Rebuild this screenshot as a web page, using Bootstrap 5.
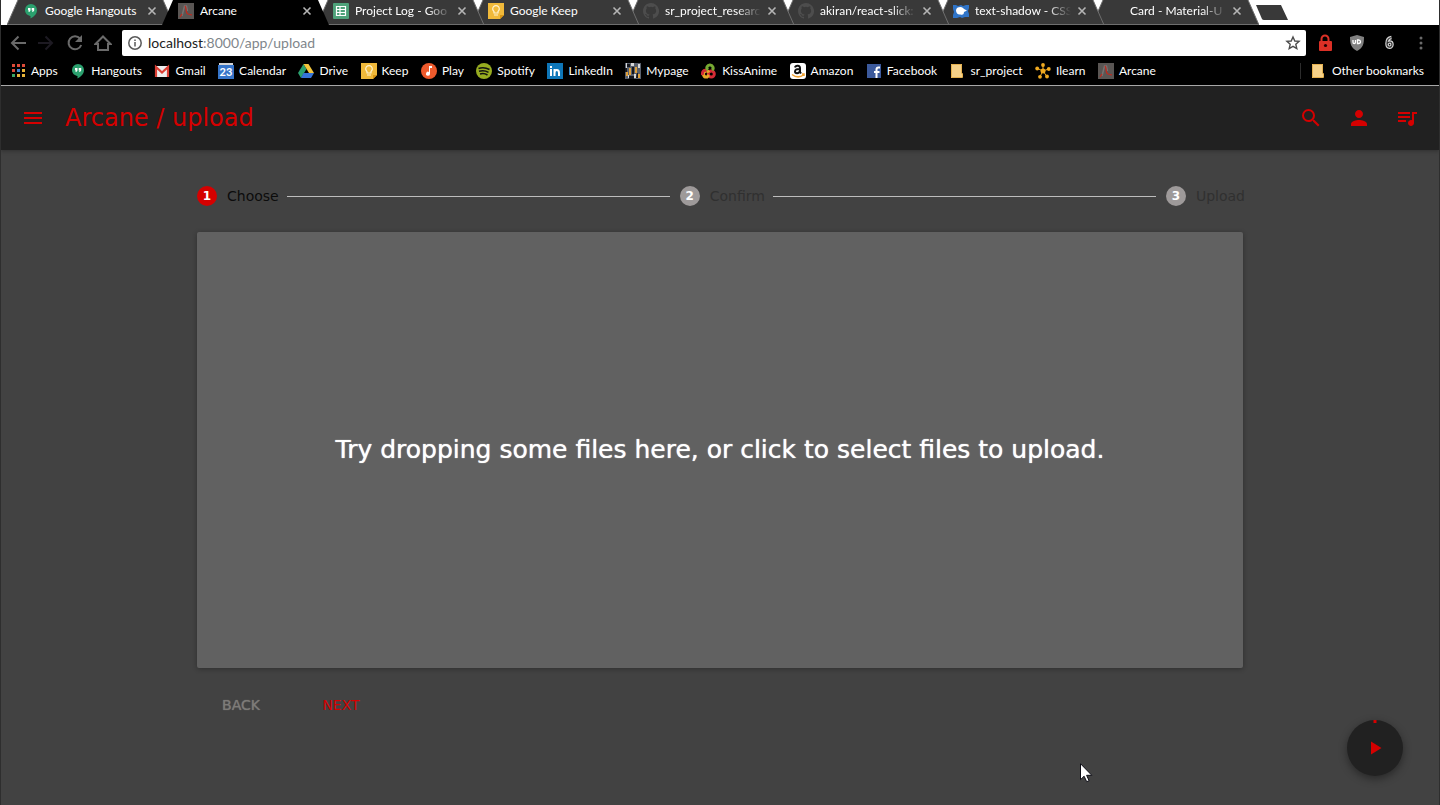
<!DOCTYPE html>
<html lang="en">
<head>
<meta charset="utf-8">
<meta name="viewport" content="width=device-width, initial-scale=1">
<title>Arcane</title>
<link href="https://cdn.jsdelivr.net/npm/bootstrap@5.3.0/dist/css/bootstrap.min.css" rel="stylesheet">
<style>
  :root { --arc-red: #d50000; --arc-bar: #212121; --arc-bg: #424242; }
  body { font-family: "Lato", "Liberation Sans", sans-serif; background: var(--arc-bg); border: solid #2e2e2e; border-width: 0 1px; }
  button { background: none; border: 0; padding: 0; color: inherit; }
  svg { display: block; flex: none; }

  /* browser tabs */
  .tab-strip { height: 25px; background: #fff; padding-left: 6px; }
  .browser-tab { width: 167px; margin-right: -12px; padding: 0 17px 3px 16px; font-size: 12px; color: #fff; flex: none; }
  .browser-tab a { color: #fff; gap: 6px; min-width: 0; }
  .tab-shape { position: absolute; inset: 0; z-index: -1; }
  .tab-title { white-space: nowrap; width: 96px; }
  .tab-title.fades { -webkit-mask-image: linear-gradient(90deg, #000 75%, transparent); mask-image: linear-gradient(90deg, #000 75%, transparent); }
  .browser-tab button { color: #b5b5b5; }
  .browser-tab:nth-child(1) { z-index: 8; } .browser-tab:nth-child(2) { z-index: 9; }
  .browser-tab:nth-child(3) { z-index: 7; } .browser-tab:nth-child(4) { z-index: 6; }
  .browser-tab:nth-child(5) { z-index: 5; } .browser-tab:nth-child(6) { z-index: 4; }
  .browser-tab:nth-child(7) { z-index: 3; } .browser-tab:nth-child(8) { z-index: 2; }

  /* toolbar and bookmarks */
  .toolbar-row { padding: 5px 9px 0 8px; height: 31px; color: #5c5c5c; }
  .nav-keys { width: 113px; padding-right: 10px; }
  .url-box { border-radius: 2px; height: 26px; padding: 0 5px; gap: 5px; }
  .url-box input { font-size: 14px; line-height: 20px; color: #80868b; margin-left: -5px; }
  .url-box .host { font-size: 14px; line-height: 20px; color: #222; }
  .ext-keys { width: 124px; padding-left: 10px; }
  .bookmark-row { height: 30px; padding: 0 15px 0 9px; font-size: 12px; border-bottom: 1px solid #b4b4b4; }
  .bookmark-row nav { flex: 0 1 1146px; }
  .bookmark-row a { color: #fff; gap: 5px; white-space: nowrap; }
  .other-marks { border-left: 1px solid #2c2c2c; padding-left: 10px; height: 16px; }

  /* application */
  .arc-app { font-family: "DejaVu Sans", sans-serif; }
  .arc-bar { height: 64px; background: var(--arc-bar); color: var(--arc-red); padding: 0 20px; box-shadow: 0 1px 4px rgba(0,0,0,.3); }
  .arc-title { font-size: 24px; line-height: 32px; margin: 0 0 0 20px; font-weight: 400; }
  .arc-main { max-width: 1046px; margin: 0 auto; padding-top: 34px; }
  .stepper { font-size: 14px; line-height: 24px; height: 24px; margin-right: -2px; }
  .step-item { gap: 10px; color: #303030; }
  .step-item.current { color: #0c0c0c; }
  .step-dot { width: 20px; height: 20px; border-radius: 50%; background: #9e9a9a; color: #fff; font-size: 12px; line-height: 20px; font-weight: 700; text-align: center; }
  .current .step-dot { background: var(--arc-red); }
  .step-line { height: 1px; background: #bdbdbd; margin: 0 10px 0 8px; }
  .drop-zone { margin-top: 24px; height: calc(100vh - 369px); min-height: 200px; background: #616161; color: #fff; font-size: 25px; line-height: 32px; text-shadow: 0 0 1px #fff; border-radius: 2px; box-shadow: 0 1px 5px rgba(0,0,0,.3); }
  .step-actions { padding-top: 19px; gap: 12px; }
  .step-actions button { min-width: 88px; height: 36px; font-size: 14px; color: var(--arc-red); }
  .step-actions button:disabled { color: #7d7b78; text-shadow: 0 0 1px #7d7b78; }
  .play-fab { position: fixed; right: 37px; bottom: 29px; width: 56px; height: 56px; border-radius: 50%; background: var(--arc-bar); box-shadow: 0 3px 8px rgba(0,0,0,.4); }
  .pointer { position: absolute; left: 1080px; top: 763px; }
</style>
</head>
<body class="min-vh-100">

<!-- shared icons -->
<svg width="0" height="0" class="position-absolute" aria-hidden="true">
  <symbol id="i-hangouts" viewBox="0 0 16 16"><path fill="#2ba06e" d="M8 1a6 6 0 0 0-6 6.100c0 3.400 2.700 5.800 5.500 5.800V15.600C11 13.800 14 10.800 14 7A6 6 0 0 0 8 1z"/><path fill="#fff" d="M5 5h2.500v2.500L6.300 9H5.400l.6-1.500H5zM8.700 5h2.500v2.500L10 9h-.9l.6-1.500h-1z"/></symbol>
  <symbol id="i-arcane" viewBox="0 0 16 16"><path fill="#5a5654" d="M0 0h16v16H0z"/><path fill="none" stroke="#777271" stroke-width="1.500" d="M4 13 6.500 3h2l1 5"/><path fill="none" stroke="#c4281d" stroke-width="1.200" d="M7 3c2 2 0 7 3 8l4 1M4 11l-2 3"/></symbol>
  <symbol id="i-keep" viewBox="0 0 16 16"><path fill="#f0b93a" d="M0 0h16v12l-4 4H0z"/><path fill="#d99512" d="M12 12h4l-4 4z"/><path fill="none" stroke="#fff3cf" stroke-width="1.200" d="M6 10V8.500a3.300 3.300 0 1 1 4 0V10zM6 12h4"/></symbol>
  <symbol id="i-github" viewBox="0 0 16 16"><path fill="#4d4d4d" d="M8 0C3.580 0 0 3.580 0 8c0 3.540 2.290 6.530 5.470 7.590.4.070.55-.17.55-.38v-1.490c-2.010.37-2.530-.49-2.690-.94-.09-.23-.48-.94-.82-1.130-.28-.15-.68-.52-.01-.53.63-.01 1.080.58 1.230.82.72 1.210 1.870.87 2.330.66.070-.52.28-.87.51-1.070-1.780-.2-3.640-.89-3.640-3.950 0-.87.31-1.590.82-2.150-.08-.2-.36-1.020.08-2.120 0 0 .67-.21 2.200.82a7.700 7.700 0 0 1 4 0c1.530-1.040 2.200-.82 2.200-.82.44 1.100.16 1.920.08 2.120.51.56.82 1.270.82 2.150 0 3.070-1.870 3.750-3.650 3.950.29.25.54.73.54 1.480v2.200c0 .21.15.46.55.38A8 8 0 0 0 8 0z"/></symbol>
  <symbol id="i-folder" viewBox="0 0 16 16"><path fill="#f5d189" d="M1 1h11v14H1z"/><path fill="none" stroke="#e4b04e" d="M1.500 1.500h10v9h1v4h-11z"/></symbol>
  <symbol id="i-close" viewBox="0 0 10 10"><path fill="none" stroke="currentColor" stroke-width="1.600" d="m1.500 1.500 7 7m0-7-7 7"/></symbol>
  <symbol id="i-tab" viewBox="0 0 167 25"><path fill="#393939" d="M0 25 11 0h145l11 25z"/><path fill="none" stroke="#6e6e6e" d="M0 24.500h167M0 25 11 0m145 0 11 25"/></symbol>
</svg>

<header class="bg-black">
  <div class="tab-strip d-flex">
    <div class="browser-tab position-relative d-flex align-items-center justify-content-between">
      <svg class="tab-shape" width="167" height="25"><use href="#i-tab"/></svg>
      <a href="#" class="d-flex align-items-center text-decoration-none"><svg width="16" height="16"><use href="#i-hangouts"/></svg><span class="tab-title">Google Hangouts</span></a>
      <button type="button" aria-label="Close tab"><svg width="10" height="10"><use href="#i-close"/></svg></button>
    </div>
    <div class="browser-tab position-relative d-flex align-items-center justify-content-between">
      <svg class="tab-shape" width="167" height="25"><path d="M0 25 11 0h145l11 25z"/></svg>
      <a href="#" class="d-flex align-items-center text-decoration-none"><svg width="16" height="16"><use href="#i-arcane"/></svg><span class="tab-title">Arcane</span></a>
      <button type="button" aria-label="Close tab"><svg width="10" height="10"><use href="#i-close"/></svg></button>
    </div>
    <div class="browser-tab position-relative d-flex align-items-center justify-content-between">
      <svg class="tab-shape" width="167" height="25"><use href="#i-tab"/></svg>
      <a href="#" class="d-flex align-items-center text-decoration-none"><svg width="16" height="16" viewBox="0 0 16 16"><rect width="16" height="16" rx="1" fill="#4fa27a"/><path fill="none" stroke="#fff" stroke-width="1.200" d="M3.500 3.500h9v9h-9zM3.500 6.500h9m-9 3h9M7 3.500v9"/></svg><span class="tab-title fades">Project Log - Goo</span></a>
      <button type="button" aria-label="Close tab"><svg width="10" height="10"><use href="#i-close"/></svg></button>
    </div>
    <div class="browser-tab position-relative d-flex align-items-center justify-content-between">
      <svg class="tab-shape" width="167" height="25"><use href="#i-tab"/></svg>
      <a href="#" class="d-flex align-items-center text-decoration-none"><svg width="16" height="16"><use href="#i-keep"/></svg><span class="tab-title">Google Keep</span></a>
      <button type="button" aria-label="Close tab"><svg width="10" height="10"><use href="#i-close"/></svg></button>
    </div>
    <div class="browser-tab position-relative d-flex align-items-center justify-content-between">
      <svg class="tab-shape" width="167" height="25"><use href="#i-tab"/></svg>
      <a href="#" class="d-flex align-items-center text-decoration-none"><svg width="16" height="16"><use href="#i-github"/></svg><span class="tab-title fades">sr_project_researc</span></a>
      <button type="button" aria-label="Close tab"><svg width="10" height="10"><use href="#i-close"/></svg></button>
    </div>
    <div class="browser-tab position-relative d-flex align-items-center justify-content-between">
      <svg class="tab-shape" width="167" height="25"><use href="#i-tab"/></svg>
      <a href="#" class="d-flex align-items-center text-decoration-none"><svg width="16" height="16"><use href="#i-github"/></svg><span class="tab-title fades">akiran/react-slick:</span></a>
      <button type="button" aria-label="Close tab"><svg width="10" height="10"><use href="#i-close"/></svg></button>
    </div>
    <div class="browser-tab position-relative d-flex align-items-center justify-content-between">
      <svg class="tab-shape" width="167" height="25"><use href="#i-tab"/></svg>
      <a href="#" class="d-flex align-items-center text-decoration-none"><svg width="16" height="16" viewBox="0 0 16 16"><path fill="#2f74c8" d="M0 2h3l2 1 3-1 2 1 3-1h3v3l-1 3 1 3v3h-4l-3 1-2-1-3 1H0v-3l1-3-1-3z"/><path fill="#fff" d="M3 7.500C3 5 5 4 7.500 4c2 0 2.500 1 3.500 2l3 1.500-3 1.500c0 3-2 3-3.500 2.500C5 12 3 10 3 7.500z"/></svg><span class="tab-title fades">text-shadow - CSS</span></a>
      <button type="button" aria-label="Close tab"><svg width="10" height="10"><use href="#i-close"/></svg></button>
    </div>
    <div class="browser-tab position-relative d-flex align-items-center justify-content-between">
      <svg class="tab-shape" width="167" height="25"><use href="#i-tab"/></svg>
      <a href="#" class="d-flex align-items-center text-decoration-none"><svg width="16" height="16"></svg><span class="tab-title fades">Card - Material-U</span></a>
      <button type="button" aria-label="Close tab"><svg width="10" height="10"><use href="#i-close"/></svg></button>
    </div>
    <button type="button" class="ms-2" aria-label="New tab"><svg width="34" height="24" viewBox="0 0 34 24"><path fill="#393939" d="M1 4h25l7 15H9q-1.500 0-2-1z"/></svg></button>
  </div>

  <div class="toolbar-row d-flex align-items-center">
    <div class="nav-keys d-flex justify-content-between">
      <button type="button" aria-label="Back"><svg width="18" height="18" viewBox="0 0 18 18" fill="none" stroke="#6a6a6a" stroke-width="2"><path d="M17 9H3m6.500-6.500L3 9l6.500 6.500"/></svg></button>
      <button type="button" aria-label="Forward" disabled><svg width="18" height="18" viewBox="0 0 18 18" fill="none" stroke="#1d1a22" stroke-width="2"><path d="M1 9h14M8.500 2.500 15 9l-6.500 6.500"/></svg></button>
      <button type="button" aria-label="Reload"><svg width="18" height="18" viewBox="0 0 18 18"><path fill="none" stroke="#6a6a6a" stroke-width="2" d="M14 4.500A6.500 6.500 0 1 0 15.200 11"/><path fill="#6a6a6a" d="M16 1v7H9z"/></svg></button>
      <button type="button" aria-label="Home"><svg width="18" height="18" viewBox="0 0 18 18" fill="none" stroke="#6a6a6a" stroke-width="2"><path d="M1.500 10 9 2.500l7.500 7.500H14v6H4v-6z"/></svg></button>
    </div>
    <div class="url-box bg-white d-flex align-items-center flex-grow-1">
      <svg width="16" height="16" viewBox="0 0 16 16" fill="none" stroke="#5a5a5a" stroke-width="1.500"><circle cx="8" cy="8" r="6.200"/><path d="M8 7v4.500M8 4.500V6"/></svg>
      <label for="address" class="host">localhost</label>
      <input id="address" type="text" class="border-0 p-0 flex-grow-1 bg-transparent" value=":8000/app/upload">
      <button type="button" aria-label="Bookmark this page"><svg width="16" height="16" viewBox="0 0 16 16" fill="none" stroke="#4c4c4c" stroke-width="1.400"><path d="m8 2 1.800 4 4.300.4-3.300 2.900 1 4.300L8 11.300l-3.800 2.300 1-4.300-3.300-2.900L6.200 6z"/></svg></button>
    </div>
    <div class="ext-keys d-flex align-items-center justify-content-between">
      <button type="button" aria-label="Lock extension"><svg width="18" height="18" viewBox="0 0 18 18"><path fill="none" stroke="#dc3026" stroke-width="2" d="M5.500 8V5a3.500 3.500 0 0 1 7 0v3"/><rect x="3" y="7" width="13" height="10" rx="1" fill="#dc3026"/><circle cx="9.500" cy="11.500" r="1.600" fill="#200"/></svg></button>
      <button type="button" aria-label="Shield extension"><svg width="18" height="18" viewBox="0 0 18 18"><path fill="#808080" d="m9 1 7 2c0 7-1 11-7 14C3 14 2 10 2 3z"/><path fill="none" stroke="#fff" stroke-width="1.300" d="M5 6v2.200q0 1.300 1.200 1.300T7.500 8.200V6M9.500 6v3.500h1q2 0 2-1.700T10.500 6z"/></svg></button>
      <button type="button" aria-label="Counter extension"><svg width="18" height="18" viewBox="0 0 18 18" fill="none"><path stroke="#d5d5d5" stroke-width="3.500" d="M11.500 3.500C8 4 7 6.500 7 9.500c0 5 5 4.500 5 1S8 7.500 7 10"/><path stroke="#333" stroke-width="1.200" d="M11.500 3.500C8 4 7 6.500 7 9.500c0 5 5 4.500 5 1S8 7.500 7 10"/></svg></button>
      <button type="button" aria-label="Menu"><svg width="18" height="18" viewBox="0 0 18 18" fill="#6a6a6a"><circle cx="9" cy="4" r="1.500"/><circle cx="9" cy="9" r="1.500"/><circle cx="9" cy="14" r="1.500"/></svg></button>
    </div>
  </div>

  <div class="bookmark-row d-flex align-items-center justify-content-between">
    <nav class="d-flex align-items-center justify-content-between" aria-label="Bookmarks">
      <a href="#" class="d-flex align-items-center text-decoration-none"><svg width="16" height="16" viewBox="0 0 16 16"><path fill="#dd4b39" d="M2 1h3v3H2zm5 0h3v3H7zm5 0h3v3h-3zM2 6h3v3H2z"/><path fill="#3f83ce" d="M7 6h3v3H7z"/><path fill="#e8b339" d="M12 6h3v3h-3zm0 5h3v3h-3zM7 11h3v3H7z"/><path fill="#3ba566" d="M2 11h3v3H2z"/></svg>Apps</a>
      <a href="#" class="d-flex align-items-center text-decoration-none"><svg width="16" height="16"><use href="#i-hangouts"/></svg>Hangouts</a>
      <a href="#" class="d-flex align-items-center text-decoration-none"><svg width="16" height="16" viewBox="0 0 16 16"><path fill="#eee" d="M1 3h14v11H1z"/><path fill="none" stroke="#dc3f34" stroke-width="2.200" d="M2 14V4l6 5.500L14 4v10"/></svg>Gmail</a>
      <a href="#" class="d-flex align-items-center text-decoration-none"><svg width="16" height="16" viewBox="0 0 16 16"><path fill="#d4d4d4" d="M1 0h14v3H1z"/><path fill="#3674c8" d="M0 2h16v14H0z"/><text x="8" y="13" text-anchor="middle" font-family="Lato, sans-serif" font-size="11" font-weight="700" fill="#fff">23</text></svg>Calendar</a>
      <a href="#" class="d-flex align-items-center text-decoration-none"><svg width="16" height="16" viewBox="0 0 16 16"><path fill="#2ba06e" d="m5.500 1 3 5L3 15l-3-5z"/><path fill="#f4c63d" d="M5.500 1h5l5.500 9h-5z"/><path fill="#3674d8" d="M5.500 10H16l-3 5H3z"/></svg>Drive</a>
      <a href="#" class="d-flex align-items-center text-decoration-none"><svg width="16" height="16"><use href="#i-keep"/></svg>Keep</a>
      <a href="#" class="d-flex align-items-center text-decoration-none"><svg width="16" height="16" viewBox="0 0 16 16"><circle cx="8" cy="8" r="8" fill="#ee5a2c"/><path fill="#fff" d="M8 3h3v2H9v5.500A2 2 0 1 1 8 9z"/></svg>Play</a>
      <a href="#" class="d-flex align-items-center text-decoration-none"><svg width="16" height="16" viewBox="0 0 16 16"><circle cx="8" cy="8" r="8" fill="#97ac20"/><path fill="none" stroke="#111" stroke-width="1.500" d="M2.500 5.500Q8 3.500 13.500 6.500M3 8.300q5-1.500 9.500 1M4 11q4-1.200 7.500 1"/></svg>Spotify</a>
      <a href="#" class="d-flex align-items-center text-decoration-none"><svg width="16" height="16" viewBox="0 0 16 16"><path fill="#0e76b8" d="M0 0h16v16H0z"/><path fill="none" stroke="#fff" stroke-width="2" d="M4 6v7M4 3v2M7.500 13V6m0 4c0-4 4.500-4 4.500 0v3"/></svg>LinkedIn</a>
      <a href="#" class="d-flex align-items-center text-decoration-none"><svg width="16" height="16" viewBox="0 0 16 16"><path fill="#59606c" d="M0 0h16v16H0z"/><path fill="#e0a13b" d="M4 5h2v7H4zm6-1h2v6h-2zM1 9h2v4H1zm12 2h2v4h-2z"/><path fill="#16181f" d="M2 1h3v3H2zm5 3h2v7H7zm5 6h1v5h-2zM0 5h2v4H0zm4 8h5v3H4z"/><path fill="#d8d8d8" d="M1 0h1v5H1zm5 0h3v3H6zm7 1h2v4h-2zM9 11h2v4H9zm-6 1h1v3H3z"/></svg>Mypage</a>
      <a href="#" class="d-flex align-items-center text-decoration-none"><svg width="16" height="16" viewBox="0 0 16 16" fill="none" stroke-width="3"><circle cx="10.300" cy="11" r="3" stroke="#d52b35"/><path stroke="#e8a828" d="M8 9.500A3 3 0 1 0 6 14l2-2"/><path stroke="#d52b35" d="M1.500 12C1 8.500 3 6.500 6 7.500"/><path stroke="#77a932" d="M7 7C4.500 5 6.500 1.800 9 2s4.500 3 2 5"/></svg>KissAnime</a>
      <a href="#" class="d-flex align-items-center text-decoration-none"><svg width="16" height="16" viewBox="0 0 16 16"><rect width="16" height="16" rx="3" fill="#fff"/><path fill="none" stroke="#111" stroke-width="2" d="M5 4.500C5.500 2 10 2 10 5v4l1 1.500M10 6C7 5.800 5 6.500 5 8.500S9 11 10 8"/><path fill="none" stroke="#f0a02e" stroke-width="1.500" d="M2 11.500c4 3 8 3 11.500.5M12 11h2v2"/></svg>Amazon</a>
      <a href="#" class="d-flex align-items-center text-decoration-none"><svg width="16" height="16" viewBox="0 0 16 16"><path fill="#3c5a9c" d="M1 1h14v14H1z"/><path fill="none" stroke="#fff" stroke-width="2" d="M14 4.500h-1.500q-2 0-2 2V15M8 9h5.500"/></svg>Facebook</a>
      <a href="#" class="d-flex align-items-center text-decoration-none"><svg width="16" height="16"><use href="#i-folder"/></svg>sr_project</a>
      <a href="#" class="d-flex align-items-center text-decoration-none"><svg width="16" height="16" viewBox="0 0 16 16" fill="#f0aa20" stroke="#f0aa20"><path d="M8 8V2.500M8 8 2.500 5.500M8 8l5.500-2M8 8l-3 5.500M8 8l3.500 5"/><g stroke="none"><circle cx="8" cy="8" r="2.500"/><circle cx="8" cy="2" r="1.900"/><circle cx="2.200" cy="5.500" r="1.900"/><circle cx="13.800" cy="6" r="1.900"/><circle cx="5" cy="13.800" r="1.900"/><circle cx="12" cy="13.500" r="1.900"/></g></svg>Ilearn</a>
      <a href="#" class="d-flex align-items-center text-decoration-none"><svg width="16" height="16"><use href="#i-arcane"/></svg>Arcane</a>
    </nav>
    <div class="other-marks d-flex align-items-center">
      <a href="#" class="d-flex align-items-center text-decoration-none"><svg width="16" height="16"><use href="#i-folder"/></svg>Other bookmarks</a>
    </div>
  </div>
</header>

<div class="arc-app">
  <header class="arc-bar d-flex align-items-center">
    <button type="button" aria-label="Open menu"><svg width="24" height="24" viewBox="0 0 24 24" fill="currentColor"><path d="M3 18h18v-2H3v2zm0-5h18v-2H3v2zm0-7v2h18V6H3z"/></svg></button>
    <h1 class="arc-title">Arcane / upload</h1>
    <div class="d-flex gap-4 ms-auto">
      <button type="button" aria-label="Search"><svg width="24" height="24" viewBox="0 0 24 24" fill="currentColor"><path d="M15.500 14h-.79l-.28-.27A6.471 6.471 0 0 0 16 9.500 6.500 6.500 0 1 0 9.500 16c1.610 0 3.090-.59 4.230-1.570l.27.28v.79l5 4.990L20.490 19l-4.990-5zm-6 0C7.010 14 5 11.990 5 9.500S7.010 5 9.500 5 14 7.010 14 9.500 11.990 14 9.500 14z"/></svg></button>
      <button type="button" aria-label="Account"><svg width="24" height="24" viewBox="0 0 24 24" fill="currentColor"><path d="M12 12c2.210 0 4-1.790 4-4s-1.790-4-4-4-4 1.790-4 4 1.790 4 4 4zm0 2c-2.670 0-8 1.340-8 4v2h16v-2c0-2.660-5.330-4-8-4z"/></svg></button>
      <button type="button" aria-label="Play queue"><svg width="24" height="24" viewBox="0 0 24 24" fill="currentColor"><path d="M15 6H3v2h12V6zm0 4H3v2h12v-2zM3 16h8v-2H3v2zM17 6v8.180c-.31-.11-.65-.18-1-.18-1.660 0-3 1.340-3 3s1.340 3 3 3 3-1.340 3-3V8h3V6h-5z"/></svg></button>
    </div>
  </header>

  <main class="arc-main">
    <div class="stepper d-flex align-items-center">
      <div class="step-item current d-flex align-items-center"><span class="step-dot">1</span>Choose</div>
      <div class="step-line flex-grow-1"></div>
      <div class="step-item d-flex align-items-center"><span class="step-dot">2</span>Confirm</div>
      <div class="step-line flex-grow-1"></div>
      <div class="step-item d-flex align-items-center"><span class="step-dot">3</span>Upload</div>
    </div>
    <button type="button" class="drop-zone w-100 d-flex align-items-center justify-content-center">Try dropping some files here, or click to select files to upload.</button>
    <div class="step-actions d-flex">
      <button type="button" disabled>BACK</button>
      <button type="button">NEXT</button>
    </div>
  </main>

  <button type="button" class="play-fab" aria-label="Play"><svg width="56" height="56" viewBox="0 0 56 56" fill="#d50000"><path d="M24 21.500v13l10.500-6.500zM26.500 0h3v3h-3z"/></svg></button>
</div>

<svg class="pointer" width="13" height="20" viewBox="0 0 13 20" aria-hidden="true"><path fill="#fff" stroke="#0c0c14" d="M.5.700v16l3.600-3.500 2.600 5.500 2.400-1-2.500-5.400h5.200z"/></svg>
<script src="https://cdn.jsdelivr.net/npm/bootstrap@5.3.0/dist/js/bootstrap.bundle.min.js"></script>
</body>
</html>
